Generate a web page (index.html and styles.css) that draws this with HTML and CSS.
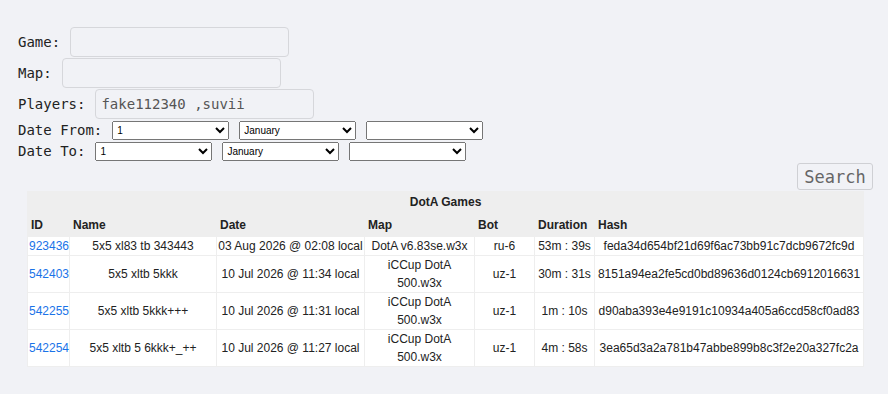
FILE: index.html
```html
<!DOCTYPE html>
<html lang="en">
<head>
    <meta charset="UTF-8" />
    <meta name="viewport" content="width=device-width, initial-scale=1.0">
    <title>DotA Games</title>
    <link rel="stylesheet" href="styles.css">
</head>
<body>
    <!-- Search Form -->
    <form class="search-form">
        <div class="field">
            <label for="game">Game:</label>
            <input type="text" id="game" />
        </div>
        <div class="field">
            <label for="map">Map:</label>
            <input type="text" id="map" />
        </div>
        <div class="field">
            <label for="players">Players:</label>
            <input type="text" id="players" value="fake112340 ,suvii" />
        </div>
        <div class="date-row">
            <label>Date From:</label>
            <select>
                <option>1</option><option>2</option><option>3</option><option>4</option><option>5</option>
            </select>
            <select>
                <option>January</option><option>February</option><option>March</option><option>April</option>
            </select>
            <select>
                <option></option><option>2025</option><option>2026</option>
            </select>
        </div>
        <div class="date-row">
            <label>Date To:</label>
            <select>
                <option>1</option><option>2</option><option>3</option><option>4</option><option>5</option>
            </select>
            <select>
                <option>January</option><option>February</option><option>March</option><option>April</option>
            </select>
            <select>
                <option></option><option>2025</option><option>2026</option>
            </select>
        </div>
        <div class="form-actions">
            <button type="button" class="search-btn">Search</button>
        </div>
    </form>

    <!-- Results -->
    <table class="games-table">
        <colgroup>
            <col class="col-id"><col class="col-name"><col class="col-date"><col class="col-map">
            <col class="col-bot"><col class="col-duration"><col class="col-hash">
        </colgroup>
        <thead>
            <tr class="title-row"><th colspan="7">DotA Games</th></tr>
            <tr class="head-row">
                <th>ID</th><th>Name</th><th>Date</th><th>Map</th><th>Bot</th><th>Duration</th><th>Hash</th>
            </tr>
        </thead>
        <tbody>
            <tr>
                <td><a href="#">923436</a></td>
                <td>5x5 xl83 tb 343443</td>
                <td>03 Aug 2026 @ 02:08 local</td>
                <td>DotA v6.83se.w3x</td>
                <td>ru-6</td>
                <td>53m : 39s</td>
                <td>feda34d654bf21d69f6ac73bb91c7dcb9672fc9d</td>
            </tr>
            <tr>
                <td><a href="#">542403</a></td>
                <td>5x5 xltb 5kkk</td>
                <td>10 Jul 2026 @ 11:34 local</td>
                <td>iCCup DotA 500.w3x</td>
                <td>uz-1</td>
                <td>30m : 31s</td>
                <td>8151a94ea2fe5cd0bd89636d0124cb6912016631</td>
            </tr>
            <tr>
                <td><a href="#">542255</a></td>
                <td>5x5 xltb 5kkk+++</td>
                <td>10 Jul 2026 @ 11:31 local</td>
                <td>iCCup DotA 500.w3x</td>
                <td>uz-1</td>
                <td>1m : 10s</td>
                <td>d90aba393e4e9191c10934a405a6ccd58cf0ad83</td>
            </tr>
            <tr>
                <td><a href="#">542254</a></td>
                <td>5x5 xltb 5 6kkk+_++</td>
                <td>10 Jul 2026 @ 11:27 local</td>
                <td>iCCup DotA 500.w3x</td>
                <td>uz-1</td>
                <td>4m : 58s</td>
                <td>3ea65d3a2a781b47abbe899b8c3f2e20a327fc2a</td>
            </tr>
        </tbody>
    </table>
</body>
</html>
```

FILE: styles.css
```css
:root {
    --bg-color: #f1f2f6;
    --text-color: #222222;
    --muted-color: #666666;
    --border-color: #d6d7db;
    --table-bg: #eeeeee;
    --link-color: #1a73e8;
}

* {
    box-sizing: border-box;
}

body {
    margin: 0;
    background-color: var(--bg-color);
    color: var(--text-color);
    font-family: "Liberation Sans", Arial, sans-serif;
}

.search-form {
    padding: 27px 15px 0 18px;
    font-family: "DejaVu Sans Mono", monospace;
    font-size: 14px;
}

.field {
    display: flex;
    align-items: center;
    gap: 10px;
    margin-bottom: 1px;
}

.field input {
    width: 219px;
    height: 30px;
    padding: 0 5px;
    background-color: var(--bg-color);
    color: #555;
    border: 1px solid var(--border-color);
    border-radius: 4px;
    font-family: inherit;
    font-size: 14px;
}

.field input:focus {
    outline: none;
    border-color: #999;
}

.date-row {
    display: flex;
    align-items: center;
    gap: 10px;
    height: 20px;
    margin-top: 1px;
}

.date-row select {
    width: 117px;
    height: 19px;
    font-family: "Liberation Sans", Arial, sans-serif;
    font-size: 10px;
}

.form-actions {
    display: flex;
    justify-content: flex-end;
    margin-top: 2px;
}

.search-btn {
    width: 76px;
    height: 27px;
    padding: 0;
    background-color: var(--bg-color);
    color: var(--muted-color);
    border: 1px solid #cfd0d4;
    border-radius: 3px;
    font-family: "DejaVu Sans Mono", monospace;
    font-size: 17px;
    cursor: pointer;
}

.games-table {
    table-layout: fixed;
    width: 837px;
    margin: 1px 0 0 27px;
    border-collapse: separate;
    border-spacing: 1px;
    background-color: var(--table-bg);
    font-size: 12px;
}

.col-id { width: 41px; }
.col-name { width: 146px; }
.col-date { width: 147px; }
.col-map { width: 109px; }
.col-bot { width: 59px; }
.col-duration { width: 59px; }
.col-hash { width: 268px; }

.games-table th {
    font-weight: 700;
    text-align: left;
    padding: 0 3px;
}

.title-row th {
    height: 20px;
    text-align: center;
}

.head-row th {
    height: 23px;
    padding-top: 1px;
}

.games-table td {
    background-color: #fff;
    text-align: center;
    line-height: 18px;
    padding: 0;
}

.games-table td:first-child {
    text-align: left;
    padding-left: 1px;
}

.games-table a {
    color: var(--link-color);
    text-decoration: none;
}
```
